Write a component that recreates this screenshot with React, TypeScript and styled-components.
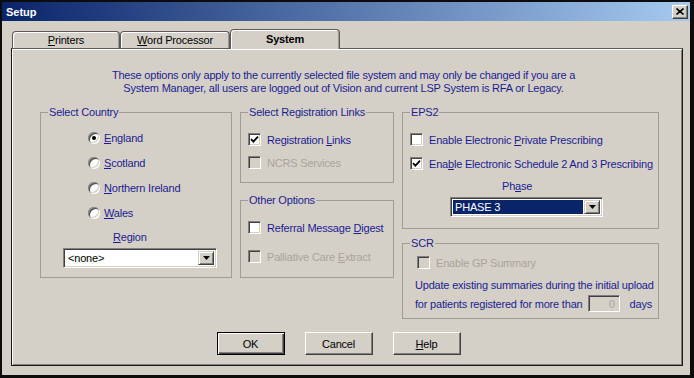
import React from "react";
import styled, { createGlobalStyle, css } from "styled-components";

const FONT = `"Liberation Sans", Arial, sans-serif`;
const NAVY = "#1c1c90";
const FACE = "#d4d0c8";
const GRAYTEXT = "#a8a49c";

const GlobalStyle = createGlobalStyle`
  html, body { margin: 0; padding: 0; background: ${FACE}; }
  body { font-family: ${FONT}; font-size: 11px; letter-spacing: -0.2px; }
  * { box-sizing: border-box; }
`;

const Window = styled.div`
  width: 694px;
  height: 378px;
  display: flex;
  flex-direction: column;
  background: ${FACE};
  border-style: solid;
  border-color: #0c0c0c;
  border-width: 2px 4px 3px 2px;
  overflow: hidden;
`;

const TitleBar = styled.div`
  height: 19px;
  flex: none;
  display: flex;
  align-items: center;
  justify-content: space-between;
  padding: 0 2px 0 4px;
  background: linear-gradient(to right, #0a246a 0%, #a6caf0 100%);
`;

const Title = styled.span`
  color: #fff;
  font-weight: bold;
  font-size: 11px;
  letter-spacing: 0;
`;

const CloseButton = styled.div`
  width: 16px;
  height: 14px;
  display: flex;
  align-items: center;
  justify-content: center;
  background: ${FACE};
  border: 1px solid;
  border-color: #fff #404040 #404040 #fff;
  box-shadow: inset -1px -1px 0 #808080;
`;

const Body = styled.div`
  flex: 1;
  display: flex;
  flex-direction: column;
  padding: 8px 7px 9px 9px;
`;

const TabStrip = styled.div`
  display: flex;
  align-items: flex-end;
  height: 20px;
  padding-left: 1px;
  margin-bottom: -1px;
  position: relative;
  z-index: 1;
`;

const Tab = styled.div<{ $w: number; $active?: boolean }>`
  width: ${(p) => p.$w}px;
  height: ${(p) => (p.$active ? 20 : 17)}px;
  margin-bottom: ${(p) => (p.$active ? 0 : 1)}px;
  display: flex;
  align-items: center;
  justify-content: center;
  padding-bottom: ${(p) => (p.$active ? 2 : 0)}px;
  background: ${FACE};
  color: #000;
  font-size: 11px;
  font-weight: ${(p) => (p.$active ? "bold" : "normal")};
  border: 1px solid #5a5a5a;
  border-bottom: none;
  border-radius: 4px 4px 0 0;
  box-shadow: inset 1px 1px 0 #fff, inset -1px 0 0 #9a9a9a;
`;

const Panel = styled.div`
  flex: 1;
  display: flex;
  flex-direction: column;
  padding: 20px 22px 0 28px;
  border: 1px solid;
  border-color: #5a5a5a #1a1a1a #1a1a1a #1a1a1a;
  box-shadow: inset 1px 1px 0 #fff, inset -1px -1px 0 #808080;
`;

const Intro = styled.p`
  margin: 0;
  padding-right: 13px;
  text-align: center;
  color: ${NAVY};
  line-height: 13px;
`;

const Columns = styled.div`
  margin-top: 11px;
  display: grid;
  grid-template-columns: 192px 154px 257px;
  column-gap: 8px;
  align-items: start;
`;

const Column = styled.div`
  display: flex;
  flex-direction: column;
`;

const Group = styled.fieldset<{ $h: number; $mt?: number }>`
  margin: ${(p) => p.$mt ?? 0}px 0 0 0;
  padding: 0 6px;
  height: ${(p) => p.$h}px;
  min-width: 0;
  border: 1px solid #a09c94;
  display: flex;
  flex-direction: column;
`;

const Legend = styled.legend`
  padding: 0 1px;
  margin-left: 1px;
  color: ${NAVY};
  line-height: 13px;
  font-size: 11px;
`;

const Line = styled.div<{ $mt?: number; $ml?: number; $disabled?: boolean }>`
  display: flex;
  align-items: center;
  height: 13px;
  gap: 6px;
  margin-top: ${(p) => p.$mt ?? 0}px;
  margin-left: ${(p) => p.$ml ?? 0}px;
  color: ${(p) => (p.$disabled ? GRAYTEXT : NAVY)};
  white-space: nowrap;
`;

const RadioLine = styled(Line)`
  gap: 4px;
`;

const Radio = styled.span<{ $checked?: boolean }>`
  width: 12px;
  height: 12px;
  flex: none;
  border-radius: 50%;
  background: #fff;
  display: flex;
  align-items: center;
  justify-content: center;
  box-shadow: inset 1px 1px 0 #909090, inset -1px -1px 0 #fff,
    inset 2px 2px 0 #505050, inset -2px -2px 0 #d4d0c8;
  &::after {
    content: "";
    width: 4px;
    height: 4px;
    border-radius: 50%;
    background: ${(p) => (p.$checked ? "#000" : "transparent")};
  }
`;

const Box = styled.span<{ $disabled?: boolean }>`
  width: 13px;
  height: 13px;
  flex: none;
  display: flex;
  align-items: center;
  justify-content: center;
  background: ${(p) => (p.$disabled ? FACE : "#fff")};
  border: 1px solid;
  border-color: #808080 #fff #fff #808080;
  box-shadow: inset 1px 1px 0 #404040, inset -1px -1px 0 #d4d0c8;
`;

const U = styled.span`
  text-decoration: underline;
`;

const Select = styled.div<{ $w: number; $mt?: number; $ml?: number; $selected?: boolean }>`
  width: ${(p) => p.$w}px;
  height: 20px;
  margin-top: ${(p) => p.$mt ?? 0}px;
  margin-left: ${(p) => p.$ml ?? 0}px;
  display: flex;
  align-items: stretch;
  background: #fff;
  border: 1px solid;
  border-color: #808080 #fff #fff #808080;
  box-shadow: inset 1px 1px 0 #404040, inset -1px -1px 0 #d4d0c8;
  padding: 2px;
  ${(p) =>
    p.$selected &&
    css`
      & > span:first-child {
        background: #0a246a;
        color: #fff;
      }
    `}
`;

const SelectValue = styled.span`
  flex: 1;
  display: flex;
  align-items: center;
  padding-left: 2px;
  margin-right: 1px;
  color: #000;
  font-size: 11px;
`;

const ArrowButton = styled.span`
  width: 16px;
  flex: none;
  display: flex;
  align-items: center;
  justify-content: center;
  background: ${FACE};
  border: 1px solid;
  border-color: ${FACE} #404040 #404040 ${FACE};
  box-shadow: inset 1px 1px 0 #fff, inset -1px -1px 0 #808080;
`;

const Caption = styled.div<{ $mt?: number; $ml?: number }>`
  margin-top: ${(p) => p.$mt ?? 0}px;
  margin-left: ${(p) => p.$ml ?? 0}px;
  height: 13px;
  line-height: 13px;
  color: ${NAVY};
  white-space: nowrap;
`;

const DaysRow = styled.div<{ $mt?: number; $ml?: number }>`
  display: flex;
  align-items: center;
  height: 17px;
  margin-top: ${(p) => p.$mt ?? 0}px;
  margin-left: ${(p) => p.$ml ?? 0}px;
  color: ${NAVY};
  white-space: nowrap;
`;

const NumberBox = styled.span`
  width: 32px;
  height: 17px;
  margin: 0 10px 0 6px;
  display: flex;
  align-items: center;
  justify-content: flex-end;
  padding-right: 4px;
  color: ${GRAYTEXT};
  background: ${FACE};
  border: 1px solid;
  border-color: #808080 #fff #fff #808080;
  box-shadow: inset 1px 1px 0 #404040, inset -1px -1px 0 #d4d0c8;
`;

const ButtonRow = styled.div`
  margin-top: 13px;
  display: flex;
  justify-content: center;
  gap: 20px;
  padding-right: 23px;
`;

const Button = styled.div<{ $default?: boolean }>`
  width: 68px;
  height: 23px;
  display: flex;
  align-items: center;
  justify-content: center;
  color: #000;
  font-size: 11px;
  background: ${FACE};
  border: 1px solid;
  border-color: #fff #404040 #404040 #fff;
  box-shadow: inset -1px -1px 0 #808080;
  ${(p) =>
    p.$default &&
    css`
      border-color: #000;
      box-shadow: inset 1px 1px 0 #fff, inset -1px -1px 0 #404040,
        inset -2px -2px 0 #808080;
    `}
`;

const Check = () => (
  <svg width="9" height="9" viewBox="0 0 9 9">
    <path d="M1 4.2 L3.4 6.6 L8 1.6" stroke="#000" strokeWidth="1.8" fill="none" />
  </svg>
);

const Arrow = () => (
  <svg width="7" height="4" viewBox="0 0 7 4">
    <path d="M0 0 H7 L3.5 4 Z" fill="#000" />
  </svg>
);

const CloseIcon = () => (
  <svg width="8" height="7" viewBox="0 0 8 7">
    <path d="M0.5 0.5 L7.5 6.5 M7.5 0.5 L0.5 6.5" stroke="#000" strokeWidth="1.6" />
  </svg>
);

export default function App() {
  return (
    <>
      <GlobalStyle />
      <Window>
        <TitleBar>
          <Title>Setup</Title>
          <CloseButton>
            <CloseIcon />
          </CloseButton>
        </TitleBar>
        <Body>
          <TabStrip>
            <Tab $w={108}>
              <span>
                <U>P</U>rinters
              </span>
            </Tab>
            <Tab $w={110}>
              <span>
                <U>W</U>ord Processor
              </span>
            </Tab>
            <Tab $w={110} $active>
              System
            </Tab>
          </TabStrip>
          <Panel>
            <Intro>
              These options only apply to the currently selected file system and may only be changed if you are a
              <br />
              System Manager, all users are logged out of Vision and current LSP System is RFA or Legacy.
            </Intro>
            <Columns>
              <Column>
                <Group $h={172}>
                  <Legend>Select Country</Legend>
                  <RadioLine $mt={12} $ml={41}>
                    <Radio $checked />
                    <span>
                      <U>E</U>ngland
                    </span>
                  </RadioLine>
                  <RadioLine $mt={12} $ml={41}>
                    <Radio />
                    <span>
                      <U>S</U>cotland
                    </span>
                  </RadioLine>
                  <RadioLine $mt={12} $ml={41}>
                    <Radio />
                    <span>
                      <U>N</U>orthern Ireland
                    </span>
                  </RadioLine>
                  <RadioLine $mt={12} $ml={41}>
                    <Radio />
                    <span>
                      <U>W</U>ales
                    </span>
                  </RadioLine>
                  <Caption $mt={12} $ml={66}>
                    <U>R</U>egion
                  </Caption>
                  <Select $w={154} $mt={4} $ml={16}>
                    <SelectValue>&lt;none&gt;</SelectValue>
                    <ArrowButton>
                      <Arrow />
                    </ArrowButton>
                  </Select>
                </Group>
              </Column>
              <Column>
                <Group $h={77}>
                  <Legend>Select Registration Links</Legend>
                  <Line $mt={14} $ml={1}>
                    <Box>
                      <Check />
                    </Box>
                    <span>
                      Registration <U>L</U>inks
                    </span>
                  </Line>
                  <Line $mt={10} $ml={1} $disabled>
                    <Box $disabled />
                    <span>NCRS Services</span>
                  </Line>
                </Group>
                <Group $h={84} $mt={11}>
                  <Legend>Other Options</Legend>
                  <Line $mt={14} $ml={1}>
                    <Box />
                    <span>
                      Referral Message <U>D</U>igest
                    </span>
                  </Line>
                  <Line $mt={16} $ml={1} $disabled>
                    <Box $disabled />
                    <span>
                      Palliative Care <U>E</U>xtract
                    </span>
                  </Line>
                </Group>
              </Column>
              <Column>
                <Group $h={123}>
                  <Legend>EPS2</Legend>
                  <Line $mt={14} $ml={1}>
                    <Box />
                    <span>
                      Enable Electronic <U>P</U>rivate Prescribing
                    </span>
                  </Line>
                  <Line $mt={11} $ml={1}>
                    <Box>
                      <Check />
                    </Box>
                    <span>
                      Ena<U>b</U>le Electronic Schedule 2 And 3 Prescribing
                    </span>
                  </Line>
                  <Caption $mt={10} $ml={93}>
                    Ph<U>a</U>se
                  </Caption>
                  <Select $w={153} $mt={4} $ml={41} $selected>
                    <SelectValue>PHASE 3</SelectValue>
                    <ArrowButton>
                      <Arrow />
                    </ArrowButton>
                  </Select>
                </Group>
                <Group $h={82} $mt={8}>
                  <Legend>SCR</Legend>
                  <Line $mt={6} $ml={8} $disabled>
                    <Box $disabled />
                    <span>Enable GP Summary</span>
                  </Line>
                  <Caption $mt={10} $ml={6}>
                    Update existing summaries during the initial upload
                  </Caption>
                  <DaysRow $mt={3} $ml={6}>
                    <span>for patients registered for more than</span>
                    <NumberBox>0</NumberBox>
                    <span>days</span>
                  </DaysRow>
                </Group>
              </Column>
            </Columns>
            <ButtonRow>
              <Button $default>OK</Button>
              <Button>Cancel</Button>
              <Button>
                <span>
                  <U>H</U>elp
                </span>
              </Button>
            </ButtonRow>
          </Panel>
        </Body>
      </Window>
    </>
  );
}
